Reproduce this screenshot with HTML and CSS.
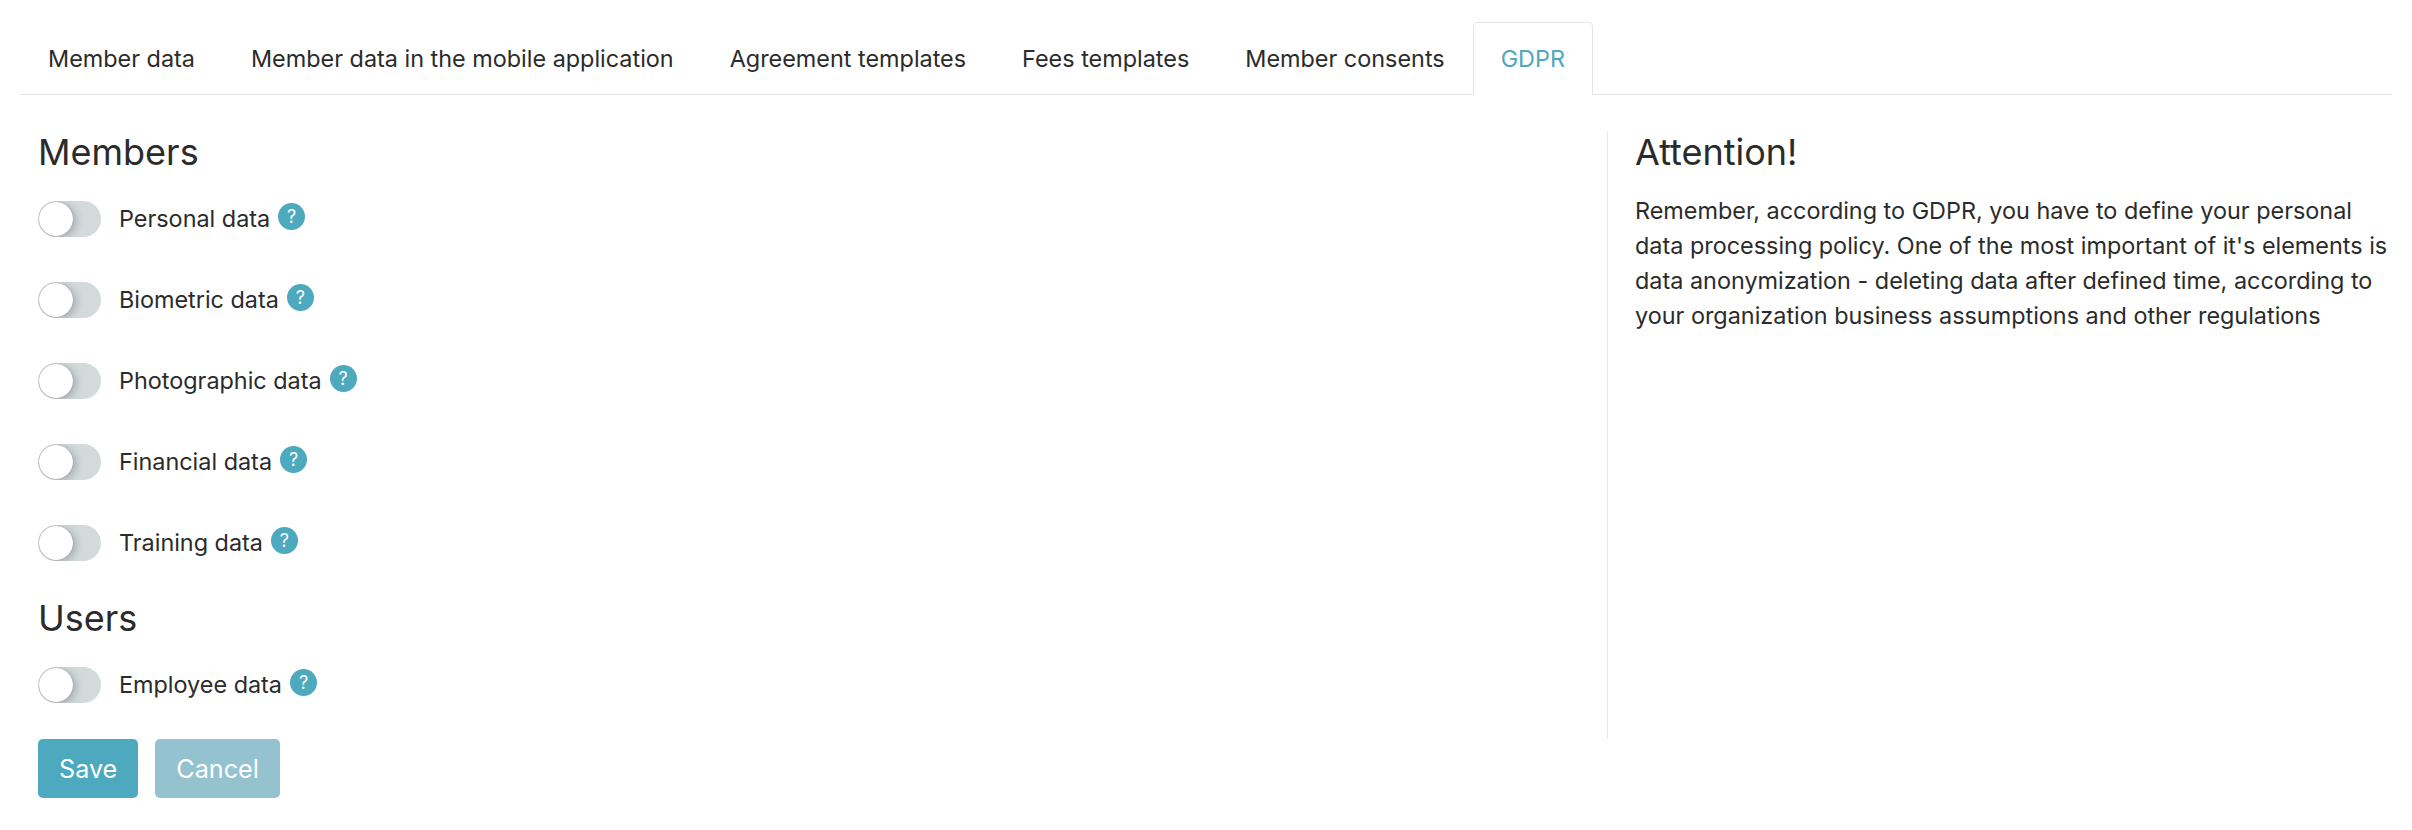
FILE: index.html
```html
<!DOCTYPE html>
<html lang="en">
<head>
    <meta charset="UTF-8">
    <title>GDPR settings</title>
    <link rel="stylesheet" href="styles.css">
</head>
<body>
    <ul class="tabs">
        <li class="tab">Member data</li>
        <li class="tab">Member data in the mobile application</li>
        <li class="tab">Agreement templates</li>
        <li class="tab">Fees templates</li>
        <li class="tab">Member consents</li>
        <li class="tab active">GDPR</li>
    </ul>

    <div class="content">
        <div class="columns">
            <div class="left">
                <h4>Members</h4>
                <div class="fields">
                    <div class="field"><span class="switch"><span class="knob"></span></span><span class="label">Personal data</span><span class="help">?</span></div>
                    <div class="field"><span class="switch"><span class="knob"></span></span><span class="label">Biometric data</span><span class="help">?</span></div>
                    <div class="field"><span class="switch"><span class="knob"></span></span><span class="label">Photographic data</span><span class="help">?</span></div>
                    <div class="field"><span class="switch"><span class="knob"></span></span><span class="label">Financial data</span><span class="help">?</span></div>
                    <div class="field"><span class="switch"><span class="knob"></span></span><span class="label">Training data</span><span class="help">?</span></div>
                </div>
                <h4>Users</h4>
                <div class="fields">
                    <div class="field"><span class="switch"><span class="knob"></span></span><span class="label">Employee data</span><span class="help">?</span></div>
                </div>
            </div>
            <div class="right">
                <h4>Attention!</h4>
                <p>Remember, according to GDPR, you have to define your personal data processing policy. One of the most important of it's elements is data anonymization - deleting data after defined time, according to your organization business assumptions and other regulations</p>
            </div>
        </div>
        <div class="buttons">
            <button class="btn">Save</button>
            <button class="btn disabled">Cancel</button>
        </div>
    </div>
</body>
</html>
```

FILE: styles.css
```css
* {
    box-sizing: border-box;
}
body {
    margin: 0;
    padding: 22px 20px 0;
    font-family: Inter, "Liberation Sans", sans-serif;
    font-size: 23.4px;
    color: #2b2b2b;
    background: white;
}
.tabs {
    display: flex;
    list-style: none;
    margin: 0;
    padding: 0;
    border-bottom: 1px solid #e3e3ea;
}
.tab {
    height: 73px;
    margin-bottom: -1px;
    padding: 0 27px;
    line-height: 71px;
    border: 1px solid transparent;
}
.tab.active {
    color: #4da9bd;
    background: white;
    border-color: #e3e3ea #e3e3ea white;
    border-radius: 5px 5px 0 0;
}
.content {
    padding: 36px 0 0 18px;
}
.columns {
    display: flex;
}
.left {
    width: 1569px;
}
.right {
    flex: 1;
    padding-left: 27px;
    border-left: 1px solid #e6e6e6;
}
h4 {
    margin: 0 0 27px;
    font-size: 36px;
    font-weight: 400;
    line-height: 43px;
}
.right h4 {
    margin-bottom: 19px;
}
.right p {
    margin: 0;
    line-height: 35px;
}
.fields {
    display: flex;
    flex-direction: column;
    gap: 45px;
    margin-bottom: 36px;
}
.field {
    display: flex;
    align-items: center;
    height: 36px;
}
.switch {
    width: 63px;
    height: 36px;
    margin-right: 18px;
    overflow: hidden;
    background: #d3dadc;
    border-radius: 18px;
}
.knob {
    display: block;
    width: 34px;
    height: 34px;
    margin: 1px 0 0 1px;
    background: white;
    border-radius: 50%;
    box-shadow: 0 0 1px rgba(0,0,0,0.4), 3px 2px 8px rgba(0,0,0,0.22);
}
.label {
    margin-bottom: 2px;
}
.help {
    width: 27px;
    height: 27px;
    margin: -5px 0 0 8px;
    color: white;
    font-size: 18px;
    line-height: 27px;
    text-align: center;
    background: #4da9bd;
    border-radius: 50%;
}
.buttons {
    display: flex;
    gap: 17px;
}
.btn {
    height: 59px;
    padding: 0 21px;
    color: white;
    font-family: inherit;
    font-size: 25.2px;
    background: #4da9bd;
    border: none;
    border-radius: 5px;
}
.btn.disabled {
    background: #94c2cf;
}
```
